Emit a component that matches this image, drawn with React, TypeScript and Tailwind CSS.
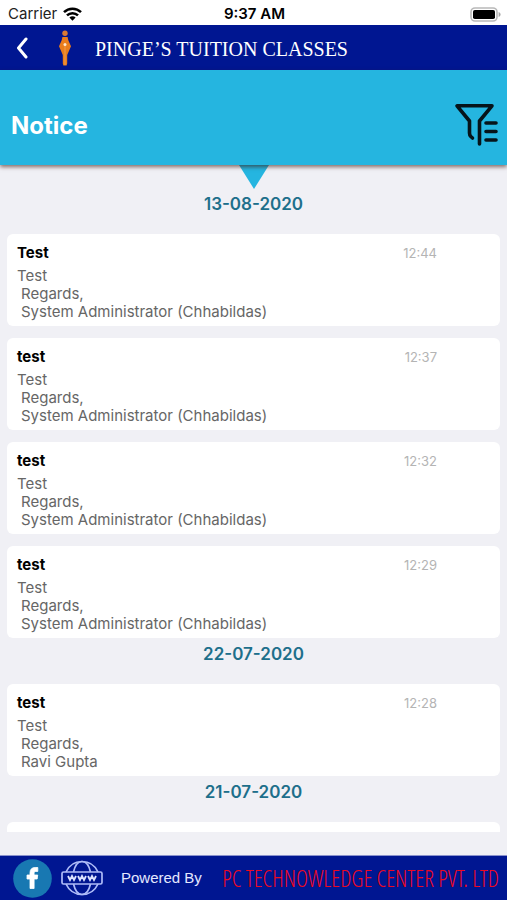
const admin = ['Regards,', 'System Administrator (Chhabildas)'];

const groups = [
  {
    date: '13-08-2020',
    notices: [
      { title: 'Test', time: '12:44', body: 'Test', signature: admin },
      { title: 'test', time: '12:37', body: 'Test', signature: admin },
      { title: 'test', time: '12:32', body: 'Test', signature: admin },
      { title: 'test', time: '12:29', body: 'Test', signature: admin },
    ],
  },
  {
    date: '22-07-2020',
    notices: [
      { title: 'test', time: '12:28', body: 'Test', signature: ['Regards,', 'Ravi Gupta'] },
    ],
  },
  {
    date: '21-07-2020',
    notices: [{ title: '', time: '', body: '', signature: [] }],
  },
];

type Notice = (typeof groups)[number]['notices'][number];

function StatusBar() {
  return (
    <div className="grid h-[25px] shrink-0 grid-cols-3 items-center bg-white pl-2 pr-1.5 pt-[3px] text-[15px] leading-5 text-[#222]">
      <div className="flex items-center gap-1.5">
        <span>Carrier</span>
        <svg width="19" height="14" viewBox="0 0 19 14" fill="none" stroke="#000" strokeWidth="2.5">
          <path d="M1 5.2a12.2 12.2 0 0 1 17 0" />
          <path d="M4 8.4a7.8 7.8 0 0 1 11 0" />
          <path d="M9.5 13.8 6.4 10.6a4.4 4.4 0 0 1 6.2 0Z" fill="#000" stroke="none" />
        </svg>
      </div>
      <span className="text-center font-semibold text-black">9:37 AM</span>
      <svg className="justify-self-end" width="31" height="15" viewBox="0 0 31 15">
        <rect x="1" y="1" width="26" height="13" rx="4" fill="#fff" stroke="#b9b9b9" strokeWidth="1.6" />
        <rect x="3" y="3" width="22" height="9" rx="1.8" fill="#000" />
        <path d="M28.6 5v5c1.3-.5 2-1.4 2-2.5s-.7-2-2-2.5Z" fill="#a8a8a8" />
      </svg>
    </div>
  );
}

function AppHeader() {
  return (
    <header className="flex h-[45px] shrink-0 items-center bg-[#001691] text-white">
      <button type="button" aria-label="Back" className="flex w-11 items-center justify-center">
        <svg width="12" height="22" viewBox="0 0 12 22" fill="none" stroke="currentColor" strokeWidth="3">
          <path d="M10 2 2.5 11 10 20" strokeLinecap="round" strokeLinejoin="round" />
        </svg>
      </button>
      <svg className="ml-[14px]" width="14" height="36" viewBox="0 0 14 36">
        <circle cx="7" cy="3.3" r="2.7" fill="#d97a35" />
        <path
          d="M4.4 7h5.2l.6 3L13 16.2 9.2 25v8.5L8.6 35.5H5.4L4.8 33.5V25L1 16.2 3.8 10Z"
          fill="#e97d1c"
        />
        <path d="M7 15v20" stroke="#f0a35c" strokeWidth=".8" />
        <circle cx="7" cy="14.5" r="1.5" fill="#ffe7cf" />
      </svg>
      <h1 className="ml-[23px] whitespace-nowrap pt-[3px] font-['Liberation_Serif',serif] text-[20px] leading-6">
        PINGE’S TUITION CLASSES
      </h1>
    </header>
  );
}

function Banner() {
  return (
    <div className="relative shrink-0">
      <div className="relative z-10 flex h-[95px] items-center justify-between bg-[#25b5e0] pl-[11px] pr-2 pt-4 shadow-[0_2px_4px_rgba(60,20,10,0.6)]">
        <h2 className="text-[24px] font-bold leading-8 text-white">Notice</h2>
        <button type="button" aria-label="Filter">
          <svg
            width="45"
            height="44"
            viewBox="0 0 45 44"
            fill="none"
            stroke="#06141a"
            strokeWidth="3.6"
            strokeLinecap="round"
            strokeLinejoin="round"
          >
            <path d="M18.5 34 16.8 32.5Q15.5 31.3 15.5 29V17L3 1.8H38L25.5 17V40" />
            <path d="M32 19H42M32 27.5H42M32 36H42" />
          </svg>
        </button>
      </div>
      <svg
        className="absolute left-1/2 top-full -translate-x-1/2"
        width="30"
        height="24"
        viewBox="0 0 30 24"
      >
        <path d="M0 0h30L15 24Z" fill="#25b5e0" />
      </svg>
    </div>
  );
}

function NoticeCard({ notice }: { notice: Notice }) {
  return (
    <article className="min-h-[92px] rounded-md bg-white px-2.5 pb-[5px] pt-[9px]">
      <div className="mb-1 flex items-center justify-between pr-[53px] leading-5">
        <h4 className="text-[15px] font-bold text-black">{notice.title}</h4>
        <time className="text-[13px] text-[#b4b4b4]">{notice.time}</time>
      </div>
      <div className="text-[15px] leading-[18px] text-[#666]">
        <p>{notice.body}</p>
        {notice.signature.map((line) => (
          <p key={line} className="pl-1">
            {line}
          </p>
        ))}
      </div>
    </article>
  );
}

function Footer() {
  return (
    <footer className="flex h-[45px] shrink-0 items-center border-t border-[#8a92cc] bg-[#001691] pl-[13px] pr-2">
      <a href="#facebook" aria-label="Facebook">
        <svg width="39" height="39" viewBox="0 0 39 39">
          <circle cx="19.5" cy="19.5" r="19.3" fill="#1878b2" />
          <path
            d="M17 29.5V20h-3v-4h3v-2.2c0-3.5 2-5.3 5.2-5.3h2.6v3.9h-1.8c-1.4 0-1.9.6-1.9 1.8V16h3.6l-.5 4h-3.1v9.5Z"
            fill="#fff"
            stroke="#fff"
            strokeWidth=".8"
          />
        </svg>
      </a>
      <a href="#website" aria-label="Website" className="ml-[9px]">
        <svg width="42" height="36" viewBox="0 0 42 36" fill="none" stroke="#aebcf8" strokeWidth="1.7">
          <path d="M5 12C8 5.5 14 1.5 21 1.5S34 5.5 37 12M5 24c3 6.5 9 10.5 16 10.5S34 30.5 37 24" />
          <path d="M12.5 12C14 5.5 17 1.5 21 1.5S28 5.5 29.5 12M12.5 24c1.5 6.5 4.5 10.5 8.5 10.5s7-4 8.5-10.5" />
          <rect x="1" y="12" width="40" height="12" rx="1.5" />
          <path
            d="m7 16 2 4 2-4 2 4 2-4M17 16l2 4 2-4 2 4 2-4M27 16l2 4 2-4 2 4 2-4"
            stroke="#dce3ff"
            strokeWidth="1.8"
          />
        </svg>
      </a>
      <span className="ml-[18px] whitespace-nowrap font-['Liberation_Sans',sans-serif] text-[15px] leading-5 text-[#e4e8ff]">
        Powered By
      </span>
      <span className="ml-auto whitespace-nowrap font-['Open_Sans_Condensed_Light','Open_Sans_Condensed',Roboto,sans-serif] text-[23px] font-light leading-8 text-[#f00820]">
        PC TECHNOWLEDGE CENTER PVT. LTD
      </span>
    </footer>
  );
}

export default function App() {
  return (
    <div className="flex h-screen flex-col bg-[#f0f0f5] font-['Inter',sans-serif]">
      <StatusBar />
      <AppHeader />
      <Banner />
      <main className="mb-[23px] min-h-0 flex-1 overflow-y-auto px-[7px] pt-[23px] [scrollbar-width:none]">
        {groups.map((group) => (
          <section key={group.date}>
            <h3 className="pb-5 pt-1.5 text-center text-[17px] font-semibold leading-5 text-[#1d6f8b]">
              {group.date}
            </h3>
            <div className="flex flex-col gap-3">
              {group.notices.map((notice) => (
                <NoticeCard key={notice.time} notice={notice} />
              ))}
            </div>
          </section>
        ))}
      </main>
      <Footer />
    </div>
  );
}
